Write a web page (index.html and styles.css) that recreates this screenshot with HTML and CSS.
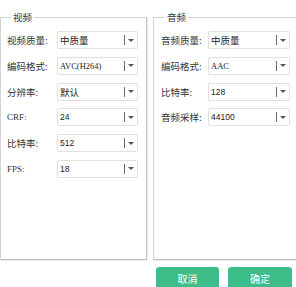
FILE: index.html
```html
<!DOCTYPE html>
<html lang="zh">
<head>
<meta charset="utf-8">
<link rel="stylesheet" href="styles.css">
</head>
<body>
<div class="panels">
  <fieldset class="group group-video">
    <legend>视频</legend>
    <div class="rows">
      <div class="row"><span class="label">视频质量:</span><div class="combo"><span class="val cjk">中质量</span><span class="sep"></span><span class="arrow"></span></div></div>
      <div class="row"><span class="label">编码格式:</span><div class="combo"><span class="val lat">AVC(H264)</span><span class="sep"></span><span class="arrow"></span></div></div>
      <div class="row"><span class="label">分辨率:</span><div class="combo"><span class="val cjk">默认</span><span class="sep"></span><span class="arrow"></span></div></div>
      <div class="row"><span class="label lat">CRF:</span><div class="combo"><span class="val num">24</span><span class="sep"></span><span class="arrow"></span></div></div>
      <div class="row"><span class="label">比特率:</span><div class="combo"><span class="val num">512</span><span class="sep"></span><span class="arrow"></span></div></div>
      <div class="row"><span class="label lat">FPS:</span><div class="combo"><span class="val num">18</span><span class="sep"></span><span class="arrow"></span></div></div>
    </div>
  </fieldset>
  <fieldset class="group group-audio">
    <legend>音频</legend>
    <div class="rows">
      <div class="row"><span class="label">音频质量:</span><div class="combo"><span class="val cjk">中质量</span><span class="sep"></span><span class="arrow"></span></div></div>
      <div class="row"><span class="label">编码格式:</span><div class="combo"><span class="val lat">AAC</span><span class="sep"></span><span class="arrow"></span></div></div>
      <div class="row"><span class="label">比特率:</span><div class="combo"><span class="val num">128</span><span class="sep"></span><span class="arrow"></span></div></div>
      <div class="row"><span class="label">音频采样:</span><div class="combo"><span class="val num">44100</span><span class="sep"></span><span class="arrow"></span></div></div>
    </div>
  </fieldset>
</div>
<div class="footer">
  <button class="btn">取消</button>
  <button class="btn">确定</button>
</div>
</body>
</html>
```
FILE: styles.css
```css
html, body {
  margin: 0;
  padding: 0;
  background: #ffffff;
  overflow: hidden;
}
body {
  width: 296px;
  height: 287px;
  font-family: "Noto Sans CJK SC", "Noto Sans", sans-serif;
  font-size: 9.5px;
  color: #333333;
}
.panels {
  display: flex;
  gap: 6px;
  padding-top: 11px;
  width: 296px;
}
.group {
  margin: 0;
  padding: 0 0 0 6px;
  border: 1px solid #d4d4d4;
  border-bottom-color: #bdbdbd;
  border-right-color: #c4c4c4;
  box-shadow: 1px 1px 0 #ececec;
  height: 249px;
  box-sizing: border-box;
  min-width: 0;
}
.group-video {
  width: 147px;
  flex: none;
}
.group-audio {
  flex: 1;
  padding-left: 7px;
  border-right: none;
  box-shadow: 0 1px 0 #ececec;
}
.group legend {
  margin-left: 4px;
  padding: 0 2px;
  line-height: 12px;
  font-size: 9.5px;
  color: #333333;
}
.rows {
  display: flex;
  flex-direction: column;
  gap: 7.8px;
  padding-top: 8px;
}
.row {
  display: flex;
  align-items: center;
  height: 18px;
}
.label {
  width: 50px;
  flex: none;
  line-height: 12px;
}
.group-audio .label {
  width: 47px;
}
.label.lat {
  font-family: "Liberation Serif", serif;
  font-size: 9px;
}
.combo {
  position: relative;
  width: 81px;
  height: 18px;
  box-sizing: border-box;
  border: 1px solid #e0e0e0;
  border-radius: 2px;
  display: flex;
  align-items: center;
  padding-left: 2px;
  flex: none;
}
.group-audio .combo {
  width: 82px;
}
.val {
  flex: 1;
  color: #222222;
  line-height: 12px;
}
.val.lat {
  font-family: "Liberation Serif", serif;
  font-size: 8.5px;
}
.val.num {
  font-family: "Liberation Sans", sans-serif;
  font-size: 8.5px;
}
.sep {
  width: 1px;
  height: 10px;
  background: #6a6a6a;
  margin-right: 3px;
}
.arrow {
  width: 0;
  height: 0;
  border-left: 3px solid transparent;
  border-right: 3px solid transparent;
  border-top: 3px solid #555555;
  margin-right: 3px;
}
.footer {
  display: flex;
  justify-content: flex-end;
  gap: 9px;
  padding-right: 4px;
  margin-top: 7px;
}
.btn {
  width: 63px;
  height: 22px;
  border: none;
  border-radius: 3px;
  background: #3dbd8a;
  color: #ffffff;
  font-family: "Noto Sans CJK SC", sans-serif;
  font-size: 10px;
  padding: 0;
}
.btn + .btn {
  width: 64px;
}
```
